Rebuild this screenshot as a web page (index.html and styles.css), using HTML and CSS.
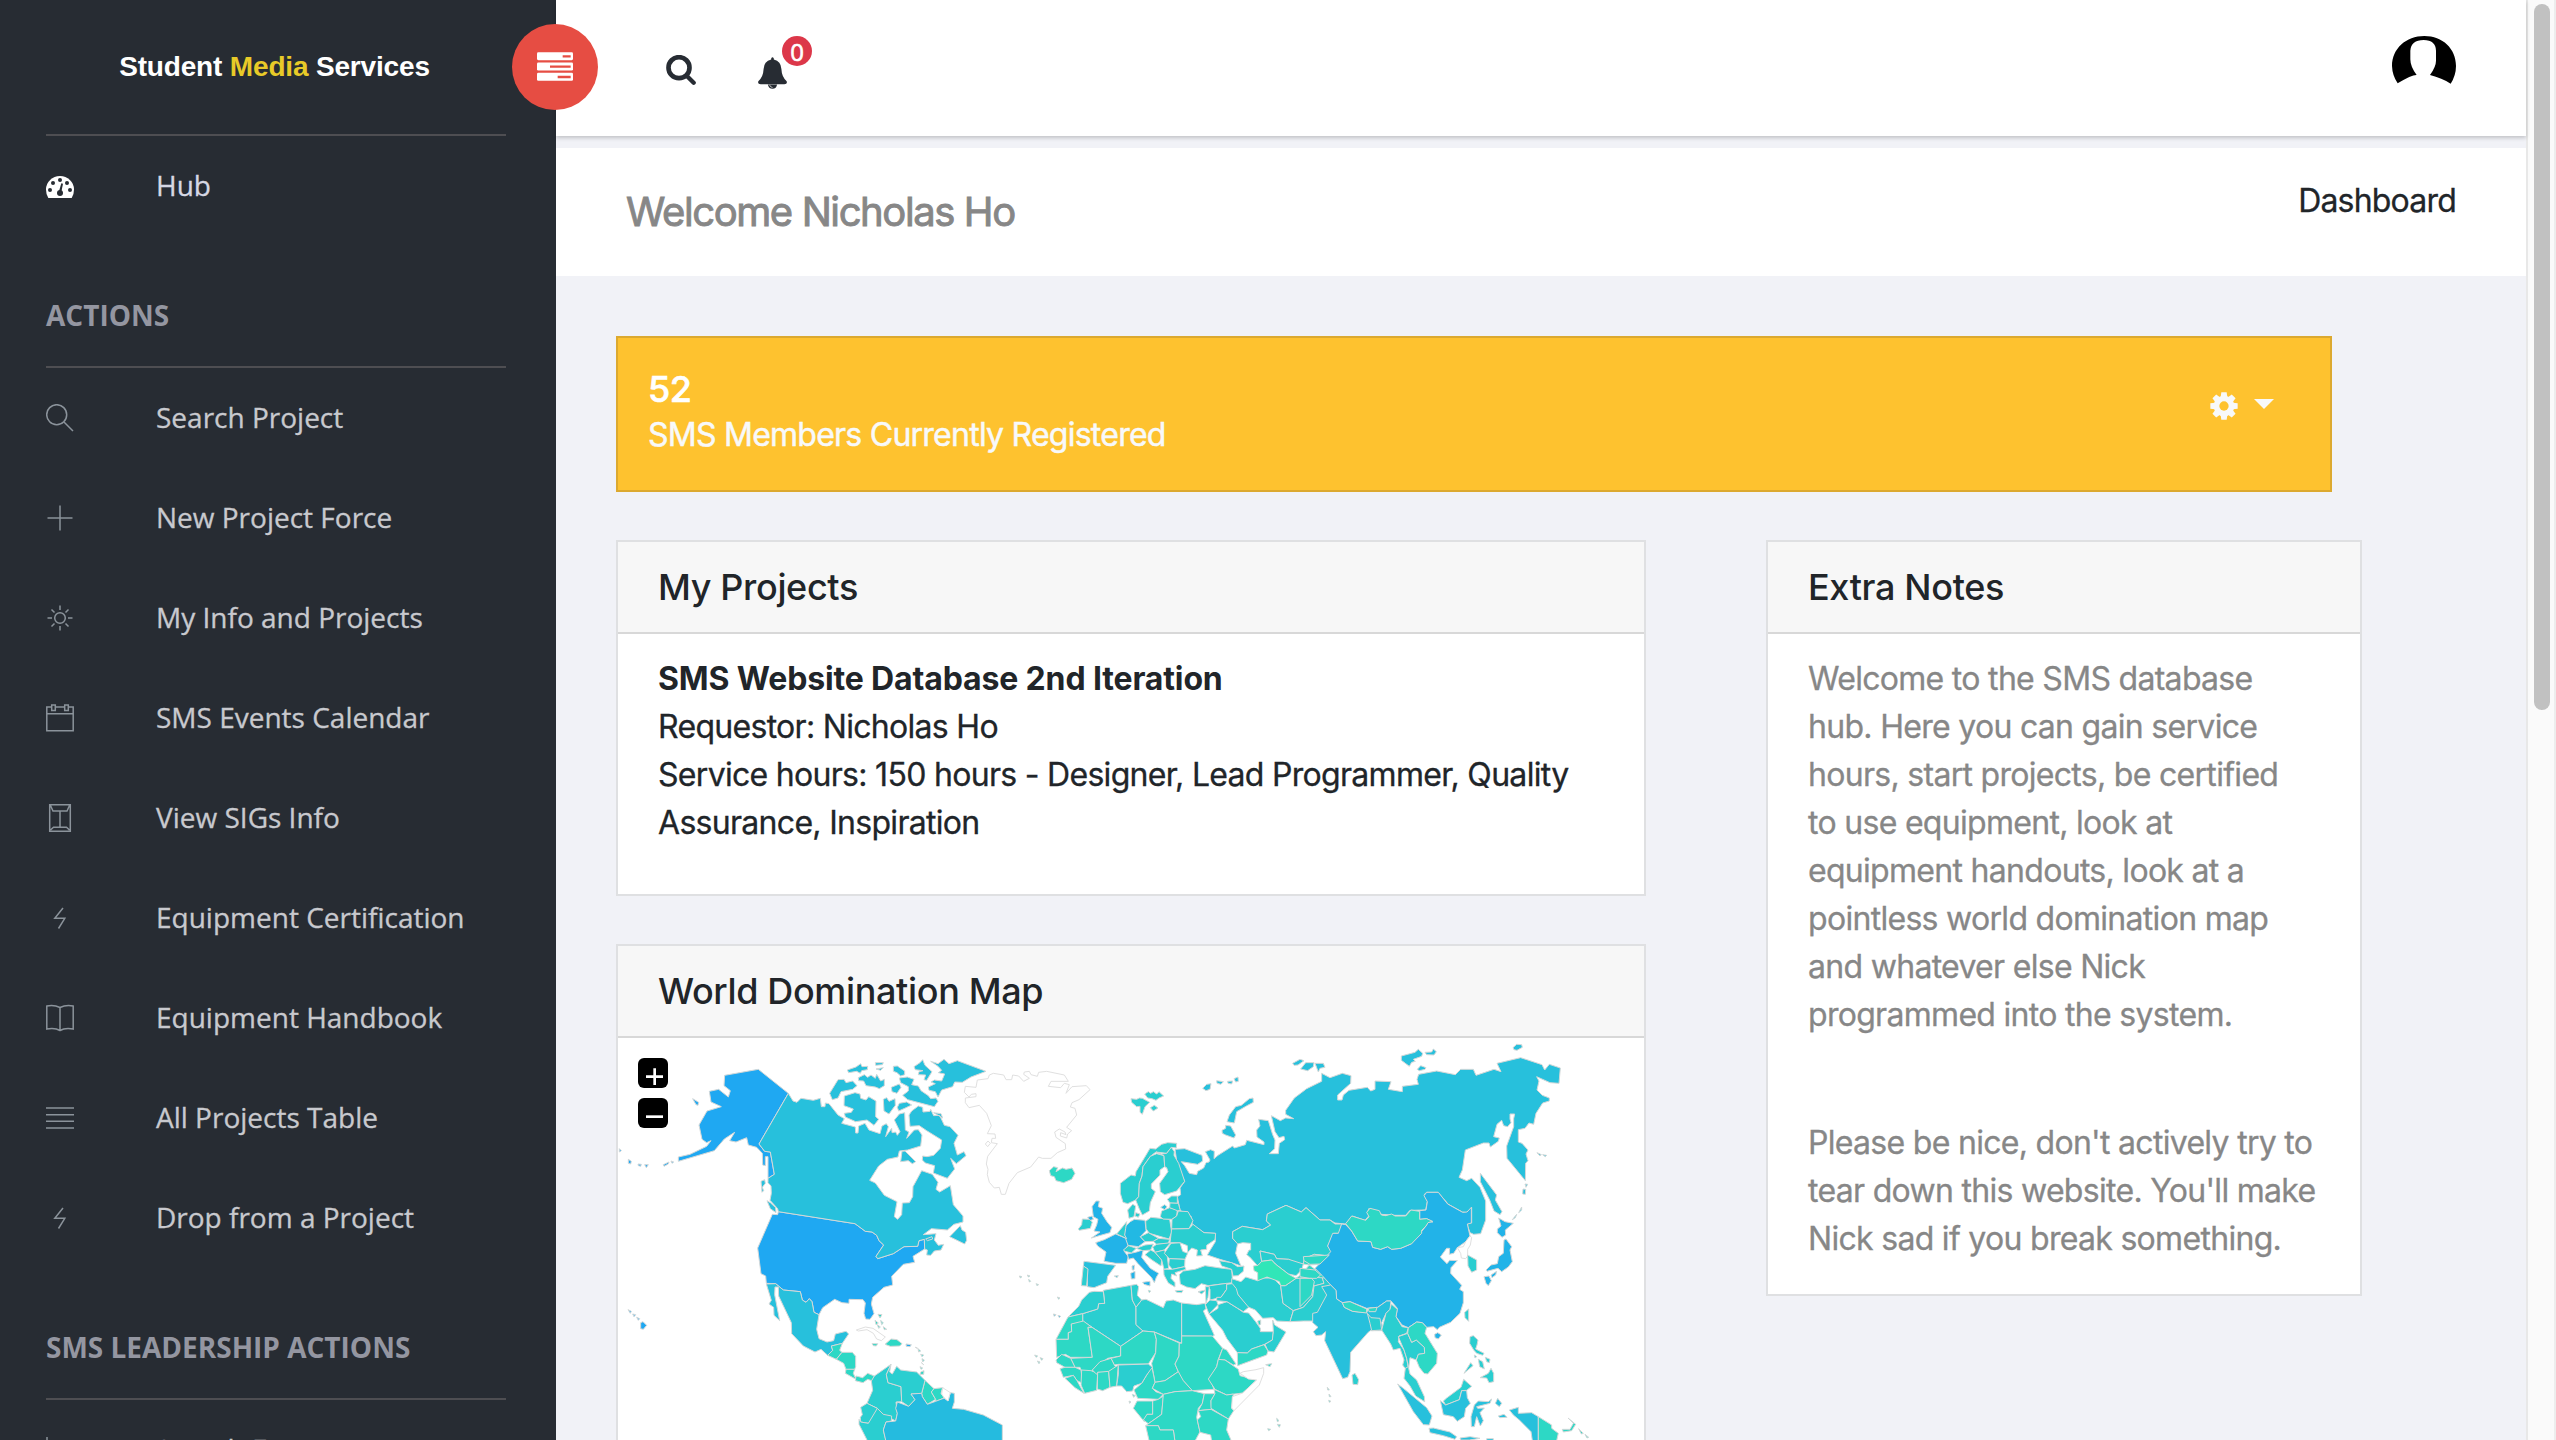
FILE: index.html
```html
<!DOCTYPE html>
<html lang="en">
<head>
<meta charset="utf-8">
<title>Student Media Services</title>
<link rel="stylesheet" href="styles.css">
</head>
<body>
<aside class="sidebar">
  <div class="brand"><span>Student <b class="brand-accent">Media</b> Services</span></div>
  <nav class="menu">
    <a class="item item-hub"><svg class="icon icon-hub" viewBox="0 0 84 66"><path d="M0 40A42 40 0 0 1 84 40Q84 56 77 66H7Q0 56 0 40Z" fill="#fff"/><g fill="#272c33"><circle cx="12" cy="42" r="6"/><circle cx="21" cy="21" r="6"/><circle cx="42" cy="12" r="6"/><circle cx="63" cy="21" r="6"/><circle cx="72" cy="42" r="6"/><circle cx="42" cy="51" r="9"/><path d="M39 46L46 22L51 23L46 48Z"/></g></svg>Hub</a>
    <h3 class="group">ACTIONS</h3>
    <a class="item"><svg class="icon" viewBox="0 0 28 28"><circle cx="10.7" cy="10.7" r="10"/><path d="M18 18L27 27"/></svg>Search Project</a>
    <a class="item"><svg class="icon" viewBox="0 0 28 28"><path d="M14 1.5V26.5M1.5 14H26.5"/></svg>New Project Force</a>
    <a class="item"><svg class="icon" viewBox="0 0 28 28"><circle cx="14" cy="14" r="5.3"/><path d="M14 1.500V6M14 22V26.500M1.500 14H6M22 14H26.500M5.500 5.500L8.500 8.500M19.500 19.500L22.500 22.500M5.500 22.500L8.500 19.500M19.500 8.500L22.500 5.500"/></svg>My Info and Projects</a>
    <a class="item"><svg class="icon" viewBox="0 0 28 28"><path d="M5.500 3H.8V26.800H27.200V3H22.500M9.500 3H18.500M.8 9.700H27.200M5.700 1H9.300V6.500H5.700ZM18.700 1H22.300V6.500H18.700Z"/></svg>SMS Events Calendar</a>
    <a class="item"><svg class="icon" viewBox="0 0 28 28"><path d="M3.700.8H24.300V27.200H3.700ZM4.500 1.500L7 7H21L23.500 1.500M14 7.500V23M4.500 26L7.500 23.200H20.500L23.500 26"/></svg>View SIGs Info</a>
    <a class="item"><svg class="icon" viewBox="0 0 28 28"><path d="M17 4L8.800 14.300H18.800L12.500 24.500"/></svg>Equipment Certification</a>
    <a class="item"><svg class="icon" viewBox="0 0 28 28"><path d="M14 3.500Q8 .5.800 2V25Q9 23.500 14 26.500Q19 23.500 27.200 25V2Q20 .5 14 3.500V26.500"/></svg>Equipment Handbook</a>
    <a class="item"><svg class="icon" viewBox="0 0 28 28"><path d="M0 4H28M0 10.700H28M0 17.300H28M0 24H28"/></svg>All Projects Table</a>
    <a class="item"><svg class="icon" viewBox="0 0 28 28"><path d="M17 4L8.800 14.300H18.800L12.500 24.500"/></svg>Drop from a Project</a>
    <h3 class="group">SMS LEADERSHIP ACTIONS</h3>
    <a class="item"><svg class="icon" viewBox="0 0 28 28"><path d="M1 1V27H27M7 22V14M14 22V9M21 22V16"/></svg>Search Force</a>
  </nav>
</aside>

<main class="page">
  <header class="topbar">
    <div class="toggle"><svg class="toggle-icon" viewBox="0 0 108 86"><g fill="#fff"><rect width="108" height="24" rx="4"/><rect y="31" width="108" height="24" rx="4"/><rect y="62" width="108" height="24" rx="4"/></g><path d="M77 9H101V16H77ZM39 40H101V47H39ZM62 71H101V78H62Z" fill="#e64d43"/></svg></div>
    <svg class="find" viewBox="0 0 90 90"><circle cx="39" cy="38" r="31.500" fill="none" stroke="#272c33" stroke-width="14"/><path d="M62 62L83 83" stroke="#272c33" stroke-width="13" stroke-linecap="round"/></svg>
    <div class="bell"><svg class="bell-icon" viewBox="0 0 88 96"><path d="M40 4Q44-3 48 4V7Q70 12 71 36Q72 60 87 73Q90 82 80 82H8Q-2 82 1 73Q16 60 17 36Q18 12 40 7Z" fill="#272c33"/><path d="M30 83H58Q56 96 44 96Q32 96 30 83Z" fill="#272c33"/><path d="M35 84Q37 91 44 92" fill="none" stroke="#fff" stroke-width="2"/></svg><span class="badge">0</span></div>
    <svg class="avatar" viewBox="0 0 192 144"><path d="M17 142A98 98 0 0 1 0 90C0 38 42 0 97 0S192 38 192 90A98 98 0 0 1 176 143Q150 126 114 117Q132 92 132 74V44Q131 12 95 12Q57 12 55 44V70Q55 92 74 117Q60 116 17 142Z"/></svg>
  </header>
  <div class="titlebar"><h1 class="welcome">Welcome Nicholas Ho</h1><span class="crumb">Dashboard</span></div>

  <div class="content">
    <section class="banner">
      <div><div class="count">52</div><p class="count-label">SMS Members Currently Registered</p></div>
      <div class="settings">
        <svg class="gear" viewBox="-42 -42 84 84"><g fill="#f8f9fa"><circle r="31"/><path id="tooth" d="M-10-27L-8-41H8L10-27Z"/><use href="#tooth" transform="rotate(45)"/><use href="#tooth" transform="rotate(90)"/><use href="#tooth" transform="rotate(135)"/><use href="#tooth" transform="rotate(180)"/><use href="#tooth" transform="rotate(225)"/><use href="#tooth" transform="rotate(270)"/><use href="#tooth" transform="rotate(315)"/></g><circle r="14" fill="#fec22f"/></svg>
        <i class="caret"></i>
      </div>
    </section>
    <div class="columns">
      <div class="main-column">
        <section class="card">
          <h2 class="card-head">My Projects</h2>
          <div class="card-body projects"><strong>SMS Website Database 2nd Iteration</strong><br>Requestor: Nicholas Ho<br>Service hours: 150 hours - Designer, Lead Programmer, Quality<br>Assurance, Inspiration</div>
        </section>
        <section class="card card-map">
          <h2 class="card-head">World Domination Map</h2>
          <div class="map-box">
            <svg class="map" viewBox="24 54 3081 1206">
              <!-- Americas -->
              <g>
                <g class="c1">
                  <path d="M344,166L445,148L535,220L447,372L464,394L481,396L493,463L474,475L474,410L466,410L466,437L458,435L457,400L440,382L415,375L410,353L378,366L359,362L374,337L343,357L313,392L205,424L205,411L240,403L290,379L303,362L290,368L276,358L267,315L291,273L334,260L303,246L298,214L326,208L355,231L361,212L342,197Z"/>
                  <path d="M487,583L503,584L505,575L735,611L766,634L786,636L800,646L807,662L821,675L798,709L803,716L850,701L882,680L923,679L927,662L943,658L944,687L909,709L914,727L880,733L845,769L848,795L822,802L788,832L784,852L792,881L780,898L767,897L762,880L766,849L759,839L717,838L717,850L696,848L674,838L638,863L627,884L612,877L606,845L598,836L588,847L577,840L571,815L520,810L497,791L469,790L467,768L453,761L443,684Z"/>
                  <path d="M248,236L266,247L264,256L258,254ZM28,386L34,392L28,396ZM55,418L64,424L62,432L55,430ZM84,432L94,433L92,439L85,437ZM104,434L115,434L109,443ZM160,434L177,426L175,432L162,439ZM183,423L191,426L186,430ZM54,869L64,874L61,880ZM68,882L77,884L72,890ZM80,892L89,896L85,901ZM92,908L99,905L110,916L100,928L92,926ZM888,972L904,974L900,980L889,979Z"/>
                </g>
                <g class="c3">
                  <path d="M535,220L549,243L561,247L573,235L610,241L631,235L634,260L645,260L646,249L657,251L684,285L703,296L695,310L736,321L737,339L744,339L746,318L765,310L777,330L810,341L816,318L829,311L835,320L827,350L845,325L846,338L857,336L862,346L870,335L853,300L868,282L884,278L886,330L897,336L890,355L913,330L925,329L936,345L932,378L893,390L868,393L864,411L832,418L806,438L779,481L796,489L823,526L861,545L853,590L863,598L875,584L877,549L898,548L908,530L909,500L935,452L967,463L984,487L978,508L989,516L1021,497L1030,554L1059,588L1059,606L1032,613L1012,630L964,626L940,644L978,641L973,660L985,676L1001,673L993,690L973,693L962,706L950,705L952,690L944,687L943,658L927,662L923,679L882,680L850,701L803,716L798,709L821,675L807,662L800,646L786,636L766,634L735,611L505,575L503,566L480,541L484,520L483,498L474,488L474,475L493,463L481,396L464,394L447,372Z"/>
                  <path d="M659,220L684,179L702,178L708,188L728,183L741,197L728,208L693,215L684,234L667,239ZM703,228L735,218L750,222L752,235L768,240L776,230L798,243L797,290L806,298L792,316L771,300L737,305L706,291L703,280L724,277L730,267L702,257ZM712,150L738,141L752,131L756,140L773,139L772,149L755,152L751,160L740,154L716,158ZM745,173L763,164L773,172L783,165L796,175L800,163L812,183L823,178V197L808,206L796,201L768,197L761,183L746,182ZM796,128L820,128L817,134L797,136ZM798,147L820,143L812,151ZM850,139L862,138L884,153L884,164L872,168L861,158L850,154ZM844,202L868,192L873,202L861,220L846,215ZM868,174L892,171L912,178L905,194L925,198L933,212L955,227L962,236L978,234L984,244L973,260L946,253L893,239L878,226L895,213L895,200L872,188ZM820,238L830,233L837,244L855,236L856,256L837,282L822,273ZM868,250L890,246L905,255L884,265L866,273L862,262ZM912,140L930,128L938,119L945,136L966,155L950,181L942,179L947,165L925,164L927,155L939,152L916,149ZM962,124L984,131L1002,118L1017,131L1042,122L1128,154L1083,171L1057,187L1034,186L1028,200L995,210L984,231L976,215L957,211L955,201L976,191L963,186L973,180L995,183L1004,162L985,158L995,151L984,139Z"/>
                  <path d="M905,273L925,258L938,262L939,276L960,274L962,268L971,287L989,286L1003,316L1020,320L1044,346L1032,370L1042,405L1062,395L1068,407L1039,431L1022,415L1034,447L1012,475L970,459L974,437L946,429L937,420L938,408L951,410L971,406L991,385L995,360L950,332L928,317L900,319L897,285ZM872,425L876,394L885,393L917,425L907,431L895,422ZM1019,650L1051,617L1056,630L1067,637L1070,661L1064,672ZM453,484L464,479L466,490L457,502L461,512L456,517ZM471,542L481,548L497,563L498,578L481,566ZM947,657L966,650L968,657L952,662ZM971,278L993,281L998,294Z"/>
                </g>
                <path class="c3" d="M469,792L497,791L520,810L571,815L577,840L588,847L598,836L606,845L612,877L627,884L620,928L627,956L651,966L671,962L676,942L708,934L716,942L697,970L685,973L664,978L668,991L653,1006L633,988L615,996L580,978L545,941L544,908L506,828L505,801L495,801L494,824L509,902L492,886L491,862L477,852L484,841Z"/>
                <g class="c5">
                  <path d="M653,1006L668,991L664,978L685,973L697,970L689,991L696,997L679,1018Z"/><path d="M696,997L727,997L737,1009L737,1040L734,1048L708,1048L701,1030L679,1018Z"/><path d="M708,1048L734,1048L730,1060L738,1078L706,1060Z"/><path d="M738,1068L758,1073L773,1060L793,1068L788,1083L773,1078L759,1088L736,1082Z"/>
                  <path d="M804,883L816,884L810,894ZM795,901L805,909L798,914ZM802,914L811,921L806,925ZM812,901L820,909L815,914ZM820,920L830,928L823,929ZM786,971L803,971L799,978L790,977ZM825,973L843,957L861,959L876,971L869,978L841,979ZM916,982L923,985ZM924,986L932,993L926,996ZM932,1003L941,1005L936,1010ZM936,1016L943,1020L938,1026ZM934,1028L941,1034ZM930,1040L938,1044L933,1048ZM932,1056L942,1052L941,1063L930,1063Z"/>
                  <path d="M935,1120L945,1081L972,1106L964,1116L977,1138L952,1153L937,1130Z"/><path d="M972,1106L998,1103L993,1120L1003,1134L977,1144L977,1138L964,1116Z"/>
                </g>
                <g class="c4">
                  <path d="M793,1068L843,1033L829,1064L834,1088L873,1100L875,1145L858,1146L862,1180L857,1203L820,1183L802,1165L771,1150L788,1111L784,1083Z"/><path d="M843,1033L839,1056L847,1062L860,1039L872,1050L920,1056L945,1081L935,1120L903,1122L915,1139L896,1159L875,1145L873,1100L834,1088L829,1064Z"/><path d="M771,1150L802,1165L799,1185L775,1210L752,1206L751,1192L757,1184L752,1162Z"/><path d="M775,1210L802,1165L820,1183L845,1188L844,1203L828,1206L820,1230L828,1262H772L747,1213V1198L752,1206Z"/>
                </g>
                <path class="c3b" d="M862,1146L896,1159L915,1139L903,1122L935,1120L937,1130L952,1153L977,1144L1003,1134L1014,1143L1021,1118L1033,1120V1146L1027,1165L1061,1168L1120,1185L1177,1215V1265H828L820,1230L828,1206L857,1203L862,1180L857,1165Z"/>
                <path class="none" d="M998,1103L1021,1118L1014,1143L1003,1134L995,1122ZM739,930L766,921L789,925L826,951L814,962L800,957L790,940L771,929L745,933Z"/>
              </g>
              <!-- Greenland, Europe and Africa -->
              <g transform="translate(1050 0)">
                <path class="none" d="M52,180L84,176L88,165L100,160L131,165L138,179L155,179L158,165L176,168L191,184L208,175L191,163L193,156L208,154L213,164L232,169L236,157L260,154L313,165L325,184H273L265,199L302,203L313,190L328,194L318,220L336,200L379,197L390,209L357,239L336,248L331,261L345,265L350,285L320,322L335,332L323,342L320,354L301,348L302,338L318,344L315,336L298,327L284,336L288,352L316,371L317,387L292,398L273,415L247,415L236,411L212,441L172,458L147,490L136,523H124L118,502L103,504L88,487L82,464L84,448L79,432L83,409L112,371L94,368L96,355H107L105,342L82,341L94,317L80,280L58,256L27,263L16,248V234L48,230V221L34,223L27,231L13,217L16,199L48,202ZM84,363L91,370L83,380L76,372Z"/>
                <path class="c5" d="M268,452L281,440L293,443L288,455L300,448L308,444L318,448L336,444L345,460L335,478L311,488L288,482L283,470L272,467Z"/>
                <g class="c3">
                  <path d="M645,388L674,386L726,406L728,423L713,433L664,425L674,437L688,460L710,464L713,454L731,444L738,428L747,426L750,420L736,395L752,389L763,394L762,416L774,406L818,378L823,384L856,374L860,361L912,374V366L891,351L890,330L900,318L896,298L925,302L938,344L945,360L944,386L928,401H955L958,370L974,359L972,349L957,353L945,335L934,287L961,302L977,294L1001,296L977,283V271L1003,234L1040,206L1085,184L1085,170L1085,160L1110,173L1147,160L1173,167L1172,190L1133,225V240H1146L1150,225L1167,211L1222,202L1232,213L1245,208V183L1293,185L1285,208L1327,215V199L1375,193L1371,178L1376,163L1430,153L1486,164L1502,148H1540L1548,166L1602,148L1623,155L1611,130L1682,113L1746,134L1754,150L1768,133L1801,144L1797,190L1770,188L1730,170L1737,183L1731,210L1747,226L1768,234V243L1748,249L1728,280L1721,313L1707,309L1695,325L1675,329V366L1686,370L1704,390L1698,402L1704,422L1697,430L1696,482L1641,415L1640,378L1661,320V296L1664,282H1650V297L1653,308L1643,320L1631,317L1625,301L1611,313L1601,350L1618,354L1615,364L1591,381L1587,369L1570,369L1516,390L1507,450L1497,472L1520,482L1535,475L1560,502L1577,543V600L1562,641L1541,643L1530,638L1523,618V609H1535V562L1521,578L1507,576L1465,553L1434,517H1400L1393,523L1402,545L1397,570L1350,571L1337,586L1305,586L1265,583L1255,575L1227,565L1222,578L1227,587L1215,601L1177,588L1157,612L1125,609L1110,600L1080,600L1038,563L1024,576L978,556L922,582L919,603L932,615L908,629L847,619L818,635V655L833,670L827,700L843,738L820,730L780,718L742,705L752,688L766,665V640L732,638L697,614L694,590L660,571L652,530L662,524L660,504L674,484L652,436Z"/>
                  <path d="M801,305L808,285L827,260L844,256L868,236L879,234L880,247L859,258L830,275L823,309ZM786,331L797,325V316L812,318L827,345L822,354L797,345L787,340ZM728,205L740,193L753,191L750,208L738,212ZM770,182L790,185L783,193L771,190ZM803,184L818,183L815,192L804,190ZM822,176L834,171L835,184L827,186ZM998,130L1020,118L1032,122L1014,135L1002,136ZM1022,147L1037,128L1062,128L1060,140L1043,152ZM1065,130L1090,130L1095,142L1080,145L1075,156ZM602,562L614,554L621,560L614,569Z"/>
                </g>
                <g class="c4">
                  <path d="M513,236L530,238L538,234L547,235L569,247L555,260L547,283L540,277V259L530,260L515,247ZM554,222L565,215L572,220L580,215L590,222L597,215L611,228L597,234L588,241L576,236L563,234ZM571,263L583,256L594,264L580,273Z"/>
                  <path d="M481,490L513,465L526,468L528,455L557,407L570,385L587,387L605,373L623,368L650,370L649,384L634,382L620,400L588,396L571,409L549,440L546,468L538,490L536,530L527,540L503,551L489,547L481,520Z"/>
                  <path d="M527,540L536,530L538,490L546,468L549,440L571,409L590,401L612,407L614,440L600,450V465L574,492V505L586,515L571,548L568,573L547,585L538,567Z"/>
                  <path d="M588,396L605,402L620,400L634,382L643,395L642,406L656,430L674,484L650,513L614,524L601,515L599,490L624,455L620,443L614,440L612,407Z"/>
                  <path d="M503,570L518,553L527,558L522,590L507,595ZM527,578L540,582L535,592L525,588ZM557,604L573,592L629,598L635,637L627,657L568,640L558,626Z"/>
                  <path d="M658,764L670,753L705,748L735,737L781,744L815,748L818,788L745,797L724,791L705,806L680,801L661,792Z"/>
                  <path d="M815,776L843,785L857,771L893,782L909,774L940,774L962,797L969,850L1000,872L990,905L950,903L940,893L908,895L886,870L862,860L834,824L815,795Z"/>
                  <path d="M747,882L774,865V854L801,845L833,865L850,877L866,879L887,905L901,925V935H940L937,960L912,974L875,987L862,999L832,998L800,955L788,931Z"/>
                </g>
                <g class="c2">
                  <path d="M396,560L408,543H418L415,560L428,565L425,580L441,605L455,622L450,638L425,645L394,654L420,636L402,633L410,615L414,598L400,590ZM383,592L396,588L400,598L389,602Z"/>
                  <path d="M407,668L433,659L467,642L500,656L504,676L492,693L505,710L500,730H467L432,724L438,696L413,678Z"/>
                  <path class="c2b" d="M495,620L511,605L523,598L555,601L558,632L541,650L555,665L535,680L504,676L493,645Z"/>
                  <path d="M502,702L530,696L550,689L547,702L545,712L571,745L596,760L589,772L583,788L575,773L533,730L520,714L506,718ZM548,787L570,784V798L552,793ZM512,760L525,754V776L514,777ZM516,738L523,735L522,750H517Z"/>
                  <path class="c3" d="M370,738L372,724L467,736L443,769L440,788L402,803L382,800V747ZM463,768L475,767L471,773Z"/>
                </g>
                <g class="c4">
                  <path d="M470,642L500,605L497,625L494,645L500,656L484,648Z"/><path d="M370,738L384,747L380,798L364,797L366,775ZM355,627L365,614L367,597L388,598L397,606L391,625L358,631Z"/>
                  <path d="M490,690L506,677L529,685L514,699L495,694Z"/><path d="M529,685L555,675L580,672L572,690L548,692Z"/><path d="M541,650L565,638L596,655L580,664L555,665Z"/><path d="M580,664L596,655L629,658L625,670L590,673Z"/><path d="M578,681L590,673L632,668L613,690L585,697Z"/><path d="M555,704L572,690L585,697L605,720L603,738L576,720Z"/><path d="M585,697L613,690L622,710L626,745L612,748L605,720Z"/><path d="M613,700L633,670L660,668L668,694L683,700L675,718L628,716Z"/><path d="M628,716L675,718L674,740L637,748L626,735Z"/><path d="M611,748L637,748L674,740L678,748L645,758L650,768L635,762L633,775L645,788V801L625,789L612,765ZM646,812L669,811L665,818L650,817ZM714,815L737,810L725,822Z"/>
                  <path d="M601,590L605,573L629,563L652,570L650,588L636,598L609,597Z"/><path d="M622,538L635,528L652,528V550L630,549Z"/><path d="M630,549L655,550L661,572L652,572L629,563Z"/><path d="M636,598L650,588L655,573L684,575L699,602L687,626L635,627Z"/>
                  <path d="M635,627L687,626L699,613L732,638L767,640L765,659L740,676V688L722,690L727,707L710,708L712,690L695,684L683,698L682,677L660,668L630,668Z"/>
                  <path d="M778,722L815,728L833,740L852,738L850,754L834,767L819,768L815,748L785,738Z"/>
                  <path d="M818,635L847,619L908,629L932,615L919,603L922,582L978,556L1024,576L1038,563L1080,600L1110,600L1125,612L1145,612L1138,640L1121,640L1103,678L1115,693L1107,708L1063,703L1033,716L1030,732L1008,730L986,718L950,716L943,703L900,693L905,724L894,736L897,742L869,711L860,704L867,690H872V670L848,668L833,672L818,655Z"/>
                  <path d="M900,693L943,703L950,716L986,718L1030,732L1025,750L1008,767L985,762L946,732L935,720L905,724Z"/>
                  <path d="M744,798L800,790V808L783,832L750,840V808Z"/><path d="M800,793L817,791L829,806L834,824L866,862L850,875L833,865L801,845L770,842V832L783,832L800,808Z"/><path d="M736,854L750,840L770,842L774,854L747,882Z"/>
                  <path d="M736,800H748L744,832L738,850Z"/>
                  <path d="M962,797L976,797L1008,775L1062,772L1085,768L1092,790L1062,798L1058,830L1030,862L1000,872L969,850Z"/>
                  <path d="M1115,765L1135,776L1144,798L1134,798L1150,826L1127,877L1110,877L1107,888L1125,912L1105,920L1084,903L1030,903L990,905L1000,872L1030,862L1058,830L1062,798L1092,790L1085,768Z"/>
                  <path d="M938,900L944,915L978,936L942,996L924,993L915,973L937,960L940,935Z"/>
                </g>
                <g class="c5">
                  <path class="c6" d="M880,738L894,736L905,724L935,720L946,732L985,762L1008,775L976,797L962,797L958,785L921,771L893,782V758L882,752Z"/>
                  <path d="M1033,716L1063,703L1107,708L1080,733L1048,735L1030,732ZM1030,755L1048,735L1065,748H1115L1130,765L1115,775L1062,772L1008,775L1025,762Z"/>
                  <path d="M832,998L862,999L875,987L912,974L924,993L920,1005L833,1037ZM917,1034L935,1031L930,1040ZM893,903L902,900V913L896,916Z"/>
                </g>
                <!-- Africa -->
                <g class="c4">
                  <path d="M368,881L413,867L416,851L434,850L430,811L513,796L517,840L528,860V914L549,933L482,979L368,903Z"/><path d="M388,817L402,814L430,815L434,850L416,851L413,867L368,881L324,891L356,859L365,840Z"/><path d="M513,796L530,793L536,800L532,826L545,840L528,862L517,840Z"/><path d="M545,840L558,838L610,863L618,843L640,840L665,849V970L583,936L549,933L528,914V862Z"/><path d="M665,849L710,854L735,850L738,866L730,873L763,946L757,949L665,948Z"/>
                </g>
                <g class="c5">
                  <path d="M324,891L368,881V912H334L335,935L325,938V958H288Z"/><path d="M288,958H325V938L335,935L334,912L370,903L396,922L384,922L397,1012H332L316,1003L290,1012Z"/><path d="M396,922L482,979V1008L443,1015L397,1050L393,1060L363,1050L360,1042L345,1042L332,1015L397,1012L384,922Z"/><path d="M482,979L549,933L583,936L589,958L587,998L565,1032L475,1033L463,1035L453,1015L482,1008Z"/><path d="M583,936L658,969L657,1008L645,1032L655,1055L615,1082L585,1087L580,1060L575,1030L587,998L589,958Z"/>
                  <path d="M665,948H757L788,985L775,1018L770,1040L750,1075L762,1108L697,1112L660,1072L655,1055L645,1032L657,1008L658,969L665,970Z"/>
                  <path d="M788,985L800,990L828,1032L820,1035L795,1020H775Z"/><path d="M775,1018L795,1020L835,1048L840,1067L890,1080L848,1119L800,1125L765,1108L745,1077L770,1040Z"/>
                  <path d="M288,1020L305,1003L332,1015L345,1042L315,1042L290,1028Z"/><path d="M300,1046L315,1042L345,1042L363,1050L368,1090L351,1082L340,1066L310,1072Z"/><path d="M315,1075L340,1066L351,1082L372,1120L345,1103Z"/><path d="M365,1050L393,1052L413,1060L410,1111L374,1120L363,1095Z"/><path d="M397,1050L420,1025L453,1015L463,1035L470,1045L440,1057L413,1057L410,1063Z"/><path d="M413,1057L446,1054L450,1102L428,1112L412,1107Z"/><path d="M446,1054L475,1035L470,1098L450,1102Z"/>
                  <path d="M575,1040L580,1062L585,1087L577,1105L587,1115L610,1123L595,1138L533,1135L522,1110L545,1090L560,1065Z"/><path d="M585,1087L615,1082L655,1055L670,1082L697,1112L645,1115L610,1123L577,1105Z"/>
                  <path d="M531,1143H578V1183H561L553,1205L520,1165Z"/><path d="M578,1143L595,1138L610,1128L605,1183L565,1211L550,1200L561,1183H578Z"/><path d="M610,1123L645,1115L697,1112L733,1121L727,1150L715,1165L710,1192L720,1235L704,1265H645L640,1230L600,1230L595,1217L557,1217L605,1183Z"/><path d="M733,1121H765L753,1142L755,1168L715,1172L727,1150Z"/><path d="M762,1108L800,1125L820,1122L815,1165L822,1171L805,1197L753,1165V1142L765,1121Z"/><path d="M715,1172L753,1168L805,1197L800,1230L815,1265H755L752,1245L720,1237L712,1200L722,1190Z"/><path d="M557,1217H595L600,1230H640L645,1265H568Z"/>
                  <path d="M950,1195L957,1202L952,1205ZM952,1213L961,1214L958,1222ZM923,1226L932,1228L926,1232ZM517,1123L526,1127L521,1132ZM507,1143L513,1146L509,1150ZM224,1005L233,1008L228,1012ZM240,1013L249,1016L245,1021ZM232,1023L240,1026L237,1031ZM178,768L186,770L181,774ZM202,765L210,768L205,771ZM206,778L212,784L208,786ZM228,791L236,794L231,797ZM292,831L300,834L296,838ZM565,811L572,813L568,818Z"/>
                </g>
                <path class="c4" d="M475,1035L565,1032L577,1042L560,1065L545,1090L522,1098L518,1113L500,1115L485,1098L470,1098L475,1063Z"/>
                <path class="c2" d="M280,882L288,884L283,889ZM294,886L302,889L298,893Z"/>
                <path class="none" d="M840,1060L850,1055L888,1049L911,1043V1060L898,1095L822,1172L815,1164L817,1130L848,1119L890,1080L865,1077Z"/>
              </g>
              <!-- Asia -->
              <g transform="translate(2070 0)">
                <path class="c3" d="M304,108L345,97L355,88L368,100L365,109L340,118L346,124L335,127L328,139L304,121ZM375,97L395,96L400,87L409,95L402,105L380,104ZM352,148L362,137L378,143L375,148L358,152ZM639,83L650,73L665,74L667,82L651,91L642,89ZM711,398L724,404L720,408ZM728,404L740,406L736,410ZM541,460L590,525L586,540L606,575L600,584L582,573L569,540L541,485ZM675,492L683,493L678,502ZM669,507L677,508L676,523L668,522ZM665,561V570L656,578ZM650,583L646,593L637,599Z"/>
                <path class="c2" d="M125,612L137,614L155,633L173,663L213,665L218,682L242,688L263,680L275,688L302,685L335,671L378,618L384,606H398L380,596L359,598V572L378,570L382,545L372,527L380,517H415L443,552L488,577L501,576L514,562V609L502,612L510,648L497,665L472,683L461,700L448,703L449,685H440L421,711L441,731L449,721L472,722L453,743L452,760L485,796L479,808L490,815V848L480,880L452,907L418,922L412,929L401,920L380,922L367,908L350,906L325,923L306,915L288,890L292,865L273,843L260,843L233,862L200,865L150,845L127,848L110,837L108,811L92,795L66,766L45,745L60,730L92,695L83,678L98,640L115,640ZM404,943L413,938L424,945L415,957L405,953ZM596,594L615,605L640,610L616,630L617,645L606,652L592,638V627L603,618ZM612,660L618,657L635,680L630,690L637,725L625,741L605,755L594,745L561,754L558,750L573,735L592,731L596,710L610,700ZM552,770L567,768L574,782L565,797L558,790ZM573,765L590,754L587,765L576,773Z"/>
                <path class="c5" d="M137,611L155,588L197,601L207,590L200,577L210,565L238,572L244,585L257,587L275,582L285,588L317,588L333,570L359,574V598L380,596L398,604L384,608L378,618L365,631V640L335,671L302,685L275,688L263,680L242,688L218,682L213,665L173,663L155,633Z"/>
                <path class="none" d="M510,648L515,652L511,675L503,688V708L497,716L484,714L482,700L472,683L490,680L497,665Z"/>
                <path class="c3" d="M92,795L108,811L110,837L127,848L133,862L158,874L200,878L205,865L233,862L260,843L273,843L270,868L258,880L245,908L250,932L236,932L210,932L202,940L152,997L150,1055L143,1072L128,1076L74,962L77,935L65,945L48,947L40,935L54,922L38,908V880L52,877L80,825L65,800Z"/>
                <g class="c4">
                  <path d="M503,705L530,720V750L515,757L504,738ZM494,877L506,867V904L495,893Z"/>
                  <path class="c5" d="M127,848L150,845L200,867V879L158,874L133,862ZM205,865L231,862L227,875H207ZM0,775H35L43,785L35,825L20,840L0,860ZM10,710L88,705L60,732L30,733L12,722ZM0,745L45,750L62,765L50,775L28,775L0,770Z"/>
                  <path d="M202,880L213,893L240,895L245,930L215,932L210,910ZM245,930L258,880L270,868L274,852L292,868L288,890L306,920L325,923L320,940L297,948L295,965L312,990L320,1015L325,1045L315,1045L308,1035L312,1020L300,985L280,990L272,972Z"/>
                  <path d="M295,950L323,940L335,967L349,960L373,982L374,1000L355,1003L349,1020L330,1013L326,1045L330,1062L350,1080L373,1130L374,1145L347,1128L330,1098L312,1075L316,1045L325,1040L320,1015L312,990Z"/>
                  <path class="c5" d="M325,923L350,906L367,908L380,922L375,940L412,1000L410,1030L383,1062L372,1060L358,1042L349,1020L355,1003L374,1000L373,982L349,960L335,967L323,940Z"/>
                  <path d="M156,1065L165,1060L176,1079L173,1094L159,1093ZM510,950L520,947L534,960L531,975L527,987L552,1000L548,1006L530,1000L521,990L509,970ZM492,1060L512,1028L519,1037ZM535,1018L548,1025L553,1047L539,1040ZM556,1012L570,1018L568,1028L560,1025ZM540,1073L565,1060L573,1045L581,1060V1085L567,1088L560,1074ZM523,1005L530,1010L525,1014Z"/>
                  <path d="M430,1143L440,1134L483,1102L491,1078L515,1099L500,1111L485,1112L478,1139L437,1155Z"/>
                </g>
                <g class="c3">
                  <path d="M293,1092L310,1105L380,1163L396,1188L388,1215L370,1214L340,1175ZM421,1142L437,1155L478,1139L485,1112H500L502,1133L511,1150L497,1165L493,1190L472,1204L460,1190L430,1184ZM387,1225L400,1224L450,1236L470,1250L465,1258L430,1247L390,1238ZM513,1190L523,1155L535,1143L565,1145L575,1137L570,1150L530,1160L533,1165L553,1164L540,1178L550,1202L541,1218L530,1190L523,1220H514ZM593,1135L605,1150L598,1160L586,1150ZM595,1188L612,1183L621,1192L600,1193ZM628,1170L655,1162V1180L695,1178L715,1190V1262H697L693,1235L658,1200L640,1185ZM480,1254L510,1250L540,1255L508,1260H482ZM560,1256H580V1262H560Z"/>
                </g>
                <path class="c5" d="M715,1190L755,1215V1225L775,1240L770,1262H715ZM787,1228L810,1228L820,1210L804,1194L827,1213L815,1232L790,1236ZM836,1226L850,1240L844,1242ZM855,1243L866,1252L861,1254ZM82,1102L88,1110H83ZM87,1122L93,1130H88ZM86,1141L93,1144L88,1147Z"/>
              </g>
            </svg>
            <div class="zoom zoom-in"><svg viewBox="0 0 90 90"><path d="M24 56H75M50 31V81" stroke="#fff" stroke-width="8"/></svg></div>
            <div class="zoom zoom-out"><svg viewBox="0 0 90 90"><path d="M24 56H75" stroke="#fff" stroke-width="8"/></svg></div>
          </div>
        </section>
      </div>
      <section class="card notes">
        <h2 class="card-head">Extra Notes</h2>
        <div class="card-body notes-body">
          <p>Welcome to the SMS database<br>hub. Here you can gain service<br>hours, start projects, be certified<br>to use equipment, look at<br>equipment handouts, look at a<br>pointless world domination map<br>and whatever else Nick<br>programmed into the system.</p>
          <p>Please be nice, don't actively try to<br>tear down this website. You'll make<br>Nick sad if you break something.</p>
        </div>
      </section>
    </div>
  </div>
</main>
<div class="scrollbar"><div class="thumb"></div></div>
</body>
</html>
```
FILE: styles.css
```css
* { box-sizing: border-box; }
body {
  margin: 0;
  height: 1440px;
  display: flex;
  overflow: hidden;
  background: #f1f2f7;
  color: #212529;
  font: 32px/48px Inter, "Liberation Sans", sans-serif;
  letter-spacing: -0.7px;
  -webkit-text-stroke: .3px currentColor;
}
h1, h2, h3, p { margin: 0; font-weight: inherit; }

/* Sidebar */
.sidebar {
  width: 556px;
  height: 1440px;
  flex: none;
  overflow: hidden;
  padding: 0 50px 0 46px;
  background: #272c33;
  color: #c8c9ce;
  font: 28px/40px "Open Sans", sans-serif;
  letter-spacing: 0;
}
.brand {
  height: 136px;
  padding: 47px 3px 0 0;
  border-bottom: 2px solid #4e4e52;
  text-align: center;
  color: #fff;
  font: bold 28px/40px "Liberation Sans", sans-serif;
  letter-spacing: -0.17px;
  -webkit-text-stroke: 0;
}
.brand-accent { color: #e8ca28; }
.menu { display: flex; flex-direction: column; }
.item {
  height: 100px;
  display: flex;
  align-items: center;
  gap: 82px;
  padding-bottom: 3px;
  white-space: nowrap;
}
.item-hub { color: #d6d8e4; }
.icon {
  width: 28px;
  height: 28px;
  flex: none;
  margin-top: 3px;
  fill: none;
  stroke: #8b939b;
  stroke-width: 1.5;
}
.icon-hub { height: 22px; stroke: none; margin-top: 5px; }
.group {
  height: 102px;
  margin-top: 30px;
  padding-top: 29px;
  border-bottom: 2px solid #4e4e52;
  color: #9496a1;
  font-size: 28px;
  font-weight: bold;
  -webkit-text-stroke: 0;
}

/* Header */
.page { width: 1970px; flex: none; display: flex; flex-direction: column; gap: 12px; }
.topbar {
  height: 136px;
  flex: none;
  position: relative;
  display: flex;
  align-items: flex-start;
  background: #fff;
  box-shadow: 0 2px 4px rgba(0, 0, 0, .2);
}
.toggle {
  position: absolute;
  left: -44px;
  top: 24px;
  width: 86px;
  height: 86px;
  display: flex;
  align-items: center;
  justify-content: center;
  border-radius: 50%;
  background: #e64d43;
}
.toggle-icon { width: 36px; height: 29px; margin: 0 1px 2px 0; }
.find { width: 30px; height: 30px; margin: 55px 0 0 110px; }
.bell { position: relative; margin: 57px 0 0 62px; line-height: 0; }
.bell-icon { width: 29px; height: 32px; }
.badge {
  position: absolute;
  left: 24px;
  top: -21px;
  width: 30px;
  height: 30px;
  border-radius: 50%;
  background: #dc3749;
  color: #fff;
  text-align: center;
  letter-spacing: 0;
  font: 24px/31px "Open Sans", sans-serif;
  -webkit-text-stroke: .6px #fff;
}
.avatar { width: 64px; height: 48px; margin: 36px 70px 0 auto; }
.titlebar {
  height: 128px;
  flex: none;
  display: flex;
  justify-content: space-between;
  padding: 29px 70px 0 70px;
  background: #fff;
}
.welcome { color: #878787; font-size: 40px; line-height: 70px; letter-spacing: -1.4px; -webkit-text-stroke: .9px #878787; }
.crumb { line-height: 48px; letter-spacing: -.8px; }

/* Content */
.content { padding: 48px 164px 0 60px; }
.banner {
  width: 1716px;
  height: 156px;
  display: flex;
  justify-content: space-between;
  padding: 29px 56px 0 30px;
  border: 2px solid #dca92f;
  background: #fec22f;
  color: #f8f9fa;
}
.count { color: #fff; font-size: 36px; font-weight: 500; line-height: 44px; letter-spacing: -.5px; -webkit-text-stroke: .6px #fff; }
.count-label { line-height: 48px; letter-spacing: -.75px; -webkit-text-stroke: .5px #f8f9fa; }
.settings { display: flex; align-items: flex-start; gap: 16px; padding-top: 25px; }
.gear { width: 28px; height: 28px; }
.caret {
  margin-top: 7px;
  border: 10px solid transparent;
  border-top-color: #f8f9fa;
  border-bottom: 0;
}
.columns { display: flex; align-items: flex-start; justify-content: space-between; margin-top: 48px; }
.main-column { width: 1030px; display: flex; flex-direction: column; gap: 48px; }
.card { border: 2px solid #dfe0e2; background: #fff; }
.card-head {
  height: 92px;
  padding-left: 40px;
  border-bottom: 2px solid #d8d8d8;
  background: #f7f7f7;
  font-size: 36px;
  font-weight: 500;
  line-height: 91px;
  letter-spacing: -.35px;
  -webkit-text-stroke: 0;
}
.card-body { padding: 21px 0 0 40px; white-space: nowrap; }
.projects { height: 260px; }
.projects strong { font-weight: 700; letter-spacing: -.14px; -webkit-text-stroke: 0; }
.notes { width: 596px; }
.notes-body { height: 660px; display: flex; flex-direction: column; gap: 80px; color: #878787; letter-spacing: -.7px; }

/* World map */
.map-box { position: relative; height: 402px; overflow: hidden; }
.map { display: block; width: 1027px; height: 402px; stroke: #d4d8d8; stroke-width: 3; stroke-linejoin: round; }
.c1 { fill: #1fa8f2; }
.c2 { fill: #22b3e8; }
.c2b { fill: #22b9e3; }
.c3 { fill: #27c0dc; }
.c3b { fill: #25bbdf; }
.c4 { fill: #2aced0; }
.c5 { fill: #2dd8c5; }
.c6 { fill: #31e6b8; }
.none { fill: #fff; stroke: #e0e0e0; }
.zoom {
  position: absolute;
  left: 20px;
  width: 30px;
  height: 30px;
  border-radius: 6px;
  background: #000;
  line-height: 0;
}
.zoom-in { top: 20px; }
.zoom-out { top: 60px; }

/* Scrollbar */
.scrollbar {
  width: 30px;
  height: 1440px;
  flex: none;
  padding: 4px 0 0 6px;
  border-left: 2px solid #e8e8e8;
  border-right: 2px solid #ededed;
  background: #fafafa;
}
.thumb { width: 16px; height: 706px; border-radius: 8px; background: #c1c1c1; }
```
